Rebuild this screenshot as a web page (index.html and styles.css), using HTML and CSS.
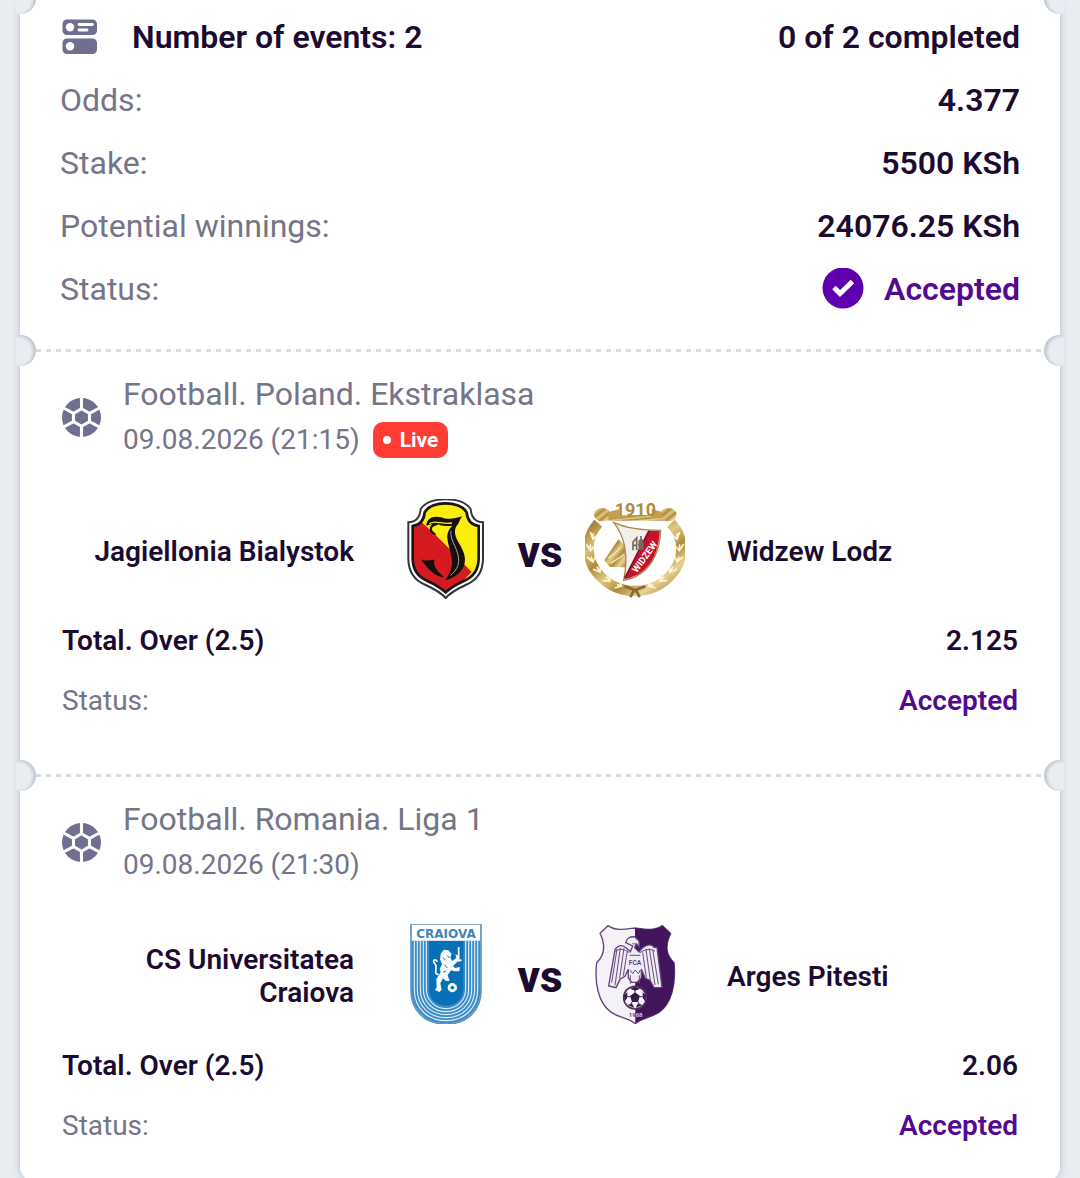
FILE: index.html
```html
<!DOCTYPE html>
<html lang="en">
<head>
<meta charset="utf-8">
<meta name="viewport" content="width=device-width, initial-scale=1">
<title>Bet slip</title>
<link rel="stylesheet" href="styles.css">
</head>
<body>
<svg width="0" height="0" class="sprite" aria-hidden="true">
  <symbol id="ball" viewBox="0 0 38 38">
    <circle cx="19" cy="19" r="19" fill="#706f8f"/>
    <path d="M19 0V10M19 28V38M19 10.500L26.800 15V23L19 27.500L11.200 23V15ZM26.800 15L36 10M26.800 23L36 28M11.200 15L2 10M11.200 23L2 28" fill="none" stroke="#fff" stroke-width="3"/>
  </symbol>
</svg>
<main class="screen">
  <article class="ticket">
    <section class="part summary">
      <div class="row strong">
        <h1 class="title">
          <svg class="icon-events" viewBox="0 0 36 36" aria-hidden="true">
            <rect x="0.500" y="0.500" width="34.500" height="15.500" rx="4.500" fill="#706f8f"/>
            <rect x="0.500" y="19.500" width="34.500" height="15.500" rx="4.500" fill="#706f8f"/>
            <circle cx="8" cy="8.200" r="4.200" fill="#fff"/>
            <circle cx="8" cy="27.300" r="4.200" fill="#fff"/>
            <path d="M17 5.500H30.500M17 11H25" stroke="#fff" stroke-width="2.800" stroke-linecap="round"/>
          </svg>
          Number of events: 2
        </h1>
        <span>0 of 2 completed</span>
      </div>
      <div class="row"><span class="label">Odds:</span><span class="value">4.377</span></div>
      <div class="row"><span class="label">Stake:</span><span class="value">5500 KSh</span></div>
      <div class="row"><span class="label">Potential winnings:</span><span class="value">24076.25 KSh</span></div>
      <div class="row"><span class="label">Status:</span>
        <span class="value accepted">
          <svg class="icon-check" viewBox="0 0 42 42" aria-hidden="true">
            <circle cx="21" cy="20" r="20.500" fill="#5e00ad"/>
            <path d="M12 19.500L18 25.500L30.500 13.500" fill="none" stroke="#fff" stroke-width="5"/>
          </svg>
          Accepted
        </span>
      </div>
    </section>

    <section class="part event">
      <header class="head">
        <svg class="icon-ball" aria-hidden="true"><use href="#ball"/></svg>
        <div>
          <h2 class="league">Football. Poland. Ekstraklasa</h2>
          <p class="date">09.08.2026 (21:15) <span class="live">Live</span></p>
        </div>
      </header>
      <div class="teams">
        <span class="team home">Jagiellonia Bialystok</span>
        <svg class="crest" viewBox="15 27 300 300" role="img" aria-label="Jagiellonia crest">
          <defs><clipPath id="jag"><path d="M166 38C193 38 222 48 232 66C234 92 247 104 268 107V205C268 240 250 263 222 275C199 285 181 296 167 310C153 296 135 285 112 275C84 263 66 240 66 205V107C87 104 100 92 102 66C112 48 140 38 166 38Z"/></clipPath></defs>
          <path d="M167 28C200 28 229 38 242 57C244 83 255 96 279 97V205C279 246 260 272 227 285C203 296 183 306 167 324C151 306 131 296 107 285C74 272 55 246 55 205V97C79 96 90 83 92 57C105 38 134 28 167 28Z" fill="#fff" stroke="#33333d" stroke-width="6"/>
          <g clip-path="url(#jag)">
            <path d="M50 30H280V320H50Z" fill="#fbee0c"/>
            <path d="M50 75L95 97C140 135 200 200 245 246L167 325H50Z" fill="#d51b20"/>
          </g>
          <path d="M166 40C193 40 220 49 230 67C232 92 246 105 266 108V205C266 240 250 261 222 273C199 283 181 294 167 307C153 294 135 283 112 273C84 261 68 240 68 205V108C88 105 102 92 104 67C114 49 140 40 166 40Z" fill="none" stroke="#17151a" stroke-width="8"/>
          <path d="M109 107C110 84 130 76 153 82C176 90 192 86 217 79C207 91 208 100 199 109C190 125 197 143 207 160C221 183 230 205 222 227C213 250 193 262 167 271C178 249 187 236 186 214C184 188 174 168 172 145C171 128 177 117 187 107C165 110 151 107 145 103C137 109 126 108 126 117C126 125 135 128 140 134C117 134 113 113 128 101Z" fill="#15100f"/>
          <path d="M93 207C110 218 120 206 133 210C129 228 140 243 163 262C141 262 113 240 93 207Z" fill="#15100f"/>
          <path d="M118 101C136 87 158 106 186 99" fill="none" stroke="#fbee0c" stroke-width="4"/>
          <path d="M183 122C178 153 208 177 206 215C204 236 192 247 182 256" fill="none" stroke="#a9a398" stroke-width="3"/>
        </svg>
        <span class="versus">vs</span>
        <svg class="crest" viewBox="30 27 300 300" role="img" aria-label="Widzew crest">
          <defs><linearGradient id="gold" x1="0" y1="0" x2="1" y2="1">
            <stop offset="0" stop-color="#a07a31"/><stop offset=".2" stop-color="#dcc274"/><stop offset=".35" stop-color="#b08a3b"/><stop offset=".5" stop-color="#e0ca84"/><stop offset=".65" stop-color="#b08a3b"/><stop offset=".8" stop-color="#e6d394"/><stop offset="1" stop-color="#a07a31"/>
          </linearGradient></defs>
          <path d="M70 100C28 145 32 215 76 259C106 290 145 303 180 303C216 303 255 290 284 259C328 215 332 145 288 100" fill="none" stroke="url(#gold)" stroke-width="31"/>
          <g fill="none" stroke="#fff6d8" stroke-width="5">
            <path d="M46 126L54 148L70 132M54 130V148"/><path d="M34 163L47 182L62 164M46 163L47 182"/><path d="M36 201L54 216L63 197M48 200L54 216"/><path d="M54 238L75 246L78 224M66 230L75 246"/><path d="M84 272L105 273L101 251M93 260L105 273"/><path d="M119 294L140 288L132 272M126 284L140 288"/>
            <path d="M314 126L306 148L290 132M306 130V148"/><path d="M326 163L313 182L298 164M314 163L313 182"/><path d="M324 201L306 216L297 197M312 200L306 216"/><path d="M306 238L285 246L282 224M294 230L285 246"/><path d="M276 272L255 273L259 251M267 260L255 273"/><path d="M241 294L220 288L228 272M234 284L220 288"/>
          </g>
          <path d="M96 75H266V92H96Z" fill="url(#gold)"/>
          <ellipse cx="82" cy="74" rx="25" ry="20" fill="url(#gold)"/>
          <ellipse cx="280" cy="74" rx="25" ry="20" fill="url(#gold)"/>
          <path d="M100 66L132 58V84H100ZM262 66L230 58V84H262Z" fill="#c3a04f"/>
          <text x="181" y="79" class="crest-year">1910</text>
          <path d="M130 148L88 211L104 231L154 232V170Z" fill="url(#gold)"/>
          <path d="M100 206L139 171M107 220L148 193" stroke="#f2e2a8" stroke-width="5"/>
          <path d="M117 98C159 117 206 121 257 121C255 180 230 257 146 271C153 238 155 204 149 170Q142 132 117 98Z" fill="#f3efeb" stroke="#a98651" stroke-width="4"/>
          <path d="M222 122L254 123C252 178 230 253 149 267Z" fill="#c3122c"/>
          <path d="M222 122L149 265" stroke="#741329" stroke-width="5"/>
          <g fill="none" stroke="#77695a" stroke-width="5"><path d="M174 181V156L185 144V181M174 166H185M193 151V179M193 151H203V179M198 138V179M189 163H205"/></g>
          <text transform="translate(217 206) rotate(-54)" class="crest-widzew">WIDZEW</text>
          <path d="M149 289L178 300L166 321M211 289L182 300L194 321" fill="none" stroke="#8e6825" stroke-width="8"/>
        </svg>
        <span class="team away">Widzew Lodz</span>
      </div>
      <div class="row pick"><span>Total. Over (2.5)</span><span>2.125</span></div>
      <div class="row"><span class="label">Status:</span><span class="value accepted">Accepted</span></div>
    </section>

    <section class="part event">
      <header class="head">
        <svg class="icon-ball" aria-hidden="true"><use href="#ball"/></svg>
        <div>
          <h2 class="league">Football. Romania. Liga 1</h2>
          <p class="date">09.08.2026 (21:30)</p>
        </div>
      </header>
      <div class="teams">
        <span class="team home">CS Universitatea Craiova</span>
        <svg class="crest" viewBox="0 42 300 300" role="img" aria-label="Craiova crest">
          <path d="M48 42H258V240C258 304 215 342 153 342C91 342 48 304 48 240Z" fill="#fff" stroke="#5d91bb" stroke-width="5"/>
          <text x="153" y="83" class="crest-craiova">CRAIOVA</text>
          <path d="M50 92H256V240C256 302 213 340 153 340C93 340 50 302 50 240Z" fill="#3d8bc6"/>
          <g fill="none" stroke="#d9edf8" stroke-width="3.500">
            <path d="M58 92V238C58 298 101 332 153 332C205 332 248 298 248 238V92"/>
            <path d="M67 92V238C67 291 106 323 153 323C200 323 239 291 239 238V92"/>
            <path d="M76 92V238C76 285 111 314 153 314C195 314 230 285 230 238V92"/>
            <path d="M85 92V238C85 278 116 305 153 305C190 305 221 278 221 238V92"/>
            <path d="M94 92V238C94 271 121 296 153 296C185 296 212 271 212 238V92"/>
          </g>
          <path d="M102 93H205V235C205 267 183 287 153 287C123 287 102 267 102 235Z" fill="#0870b7"/>
          <path d="M137 132L146 119L160 121L170 132L166 143L172 153L184 143L181 132L190 138L187 155L174 168L180 174L195 171L193 184L178 184L168 181L158 196L164 213L153 213L144 205L136 220L140 240L133 246L120 240L125 232L124 207L137 187L134 176L141 163L135 148Z" fill="#f5fbff"/>
          <path d="M131 194C111 190 132 171 119 160C109 151 125 144 126 156M191 111V155M183 151H200" fill="none" stroke="#f5fbff" stroke-width="5"/>
          <path d="M144 143L152 151M157 137L163 144M148 164L157 174M144 187L153 183" stroke="#0870b7" stroke-width="3"/>
          <circle cx="172" cy="233" r="14" fill="#f5fbff"/>
          <path d="M172 228L177 232L175 237H169L167 232ZM161 225L164 221M180 221L183 225M162 242L166 245M182 242L178 245" fill="#0870b7" stroke="#0870b7" stroke-width="2"/>
        </svg>
        <span class="versus">vs</span>
        <svg class="crest" viewBox="15 42 300 300" role="img" aria-label="Arges Pitesti crest">
          <path d="M84 47C108 64 139 57 165 54C191 57 222 64 247 47L272 70C259 99 252 130 282 158C288 217 277 280 237 307C209 324 184 325 166 341C148 325 120 324 94 307C54 280 43 217 50 158C80 130 74 99 60 70Z" fill="#f4f2f7" stroke="#64427b" stroke-width="4"/>
          <path d="M165 54C191 57 222 64 247 47L272 70C259 99 252 130 282 158C288 217 277 280 237 307C209 324 184 325 166 341Z" fill="#42145c"/>
          <path d="M137 98C139 84 152 78 165 81L177 93L178 111L169 102L164 113L177 126C190 107 212 97 222 112L231 113L246 232L222 233L210 211L196 205L184 178L184 204L171 217L155 217L145 204V178L135 199L121 207L108 233L86 228L105 119C119 99 134 106 151 125L158 108Z" fill="#efebf2" stroke="#62427a" stroke-width="4"/>
          <g fill="none" stroke="#6b4a80" stroke-width="3"><path d="M111 117L95 218M121 114L105 226M132 114L119 205M142 122L130 197M218 118L235 223M208 116L225 225M198 118L211 211M188 127L199 203M106 124C120 114 132 117 148 128M225 124C212 114 195 117 180 128M149 136H181M150 180L158 191L166 180L175 191L181 180M151 196V221M178 196V221M157 101L172 103"/></g>
          <text x="165" y="165" class="crest-initials">FCA</text>
          <circle cx="165" cy="263" r="34" fill="#f9f7fb" stroke="#503063" stroke-width="5"/>
          <path d="M165 247L180 258L174 276H156L150 258ZM150 236L165 230L181 236L165 242ZM132 255L142 247V263L134 275ZM198 255L188 247V263L196 275ZM143 285L156 280L163 294ZM187 285L174 280L167 294Z" fill="#371947"/>
          <path d="M165 240V248M142 260H151M180 260H188M156 276L151 285M174 276L179 285" stroke="#503063" stroke-width="3"/>
          <text x="167" y="321" class="crest-founded"><tspan fill="#62427a">19</tspan><tspan fill="#d8c9e2">68</tspan></text>
        </svg>
        <span class="team away">Arges Pitesti</span>
      </div>
      <div class="row pick"><span>Total. Over (2.5)</span><span>2.06</span></div>
      <div class="row"><span class="label">Status:</span><span class="value accepted">Accepted</span></div>
    </section>
  </article>
</main>
</body>
</html>
```
FILE: styles.css
```css
* { box-sizing: border-box; }

body {
  margin: 0;
  background: #e9edf2;
  color: #1c0a30;
  font-family: Roboto, "Liberation Sans", sans-serif;
}

h1, h2, p { margin: 0; font-size: inherit; font-weight: inherit; }

.sprite { position: absolute; }

.screen {
  height: 100vh;
  overflow: hidden auto;
  scrollbar-width: none;
}

.ticket {
  margin: -3px 20px 20px;
  background: #fff;
  border-radius: 14px;
  box-shadow: 0 0 8px #b4bdcb;
}

.part {
  position: relative;
  background: repeating-linear-gradient(90deg, #d5dfe3 0 5px, transparent 5px 10px) 16px 0 / calc(100% - 32px) 3px no-repeat;
}

/* Punched half circles at both ends of each tear line */
.part::before,
.part::after {
  content: "";
  position: absolute;
  top: -14px;
  width: 31px;
  height: 31px;
  border-radius: 50%;
  background: #e9edf2;
}

.part::before {
  left: -15px;
  box-shadow: inset -3px 1px 3px #c3c9d1;
  clip-path: inset(0 0 0 11px);
}

.part::after {
  right: -15px;
  box-shadow: inset 3px 1px 3px #c3c9d1;
  clip-path: inset(0 11px 0 0);
}

.row {
  display: flex;
  align-items: center;
  justify-content: space-between;
}

.label { color: #757489; }

.value { font-weight: 600; }

.accepted {
  display: flex;
  align-items: center;
  gap: 20px;
  color: #530a91;
}

.summary {
  padding: 8px 40px 29px;
  font-size: 32px;
}

.summary .row { height: 63px; }

.strong { font-weight: 600; }

.title {
  display: flex;
  align-items: center;
  gap: 34px;
}

.icon-events {
  width: 36px;
  height: 36px;
  margin-left: 2px;
}

.icon-check { width: 42px; height: 42px; }

.event {
  padding: 23px 42px 44px;
  font-size: 28px;
}

.event:last-child { padding-bottom: 26px; }

.head {
  display: flex;
  align-items: center;
  gap: 22px;
  line-height: 45px;
  color: #757489;
}

.icon-ball { width: 39px; height: 39px; }

.league { font-size: 32px; }

.date {
  display: flex;
  align-items: center;
  gap: 13px;
}

.live {
  display: flex;
  align-items: center;
  gap: 9px;
  padding: 0 10px;
  border-radius: 10px;
  background: #ff3d34;
  color: #fff;
  font-size: 21px;
  font-weight: 700;
  line-height: 36px;
}

.live::before {
  content: "";
  width: 8px;
  height: 8px;
  border-radius: 50%;
  background: #fff;
}

.teams {
  display: grid;
  grid-template-columns: 1fr 100px 90px 100px 1fr;
  align-items: center;
  height: 100px;
  margin: 37px 0 11px;
}

.team {
  padding: 4px 42px 0;
  font-weight: 600;
  line-height: 33px;
}

.home { padding: 4px 41px 0 0; text-align: right; }

.away { padding-right: 0; }

.crest { width: 100px; height: 100px; }

.versus {
  padding-top: 6px;
  font-size: 44px;
  font-weight: 800;
  line-height: 50px;
  text-align: center;
}

.event .row { height: 60px; }

.pick { font-weight: 600; }

.crest text {
  font-weight: 700;
  text-anchor: middle;
}

.crest-year { fill: #b18b3a; font-family: "Liberation Sans Narrow", Roboto, sans-serif; font-size: 54px; }
.crest-widzew { fill: #fff; font-size: 28px; }
.crest-craiova { fill: #4384b5; font-family: "DejaVu Sans", sans-serif; font-size: 36px; }
.crest-initials { fill: #62427a; font-size: 20px; }
.crest-founded { font-size: 18px; }
```
